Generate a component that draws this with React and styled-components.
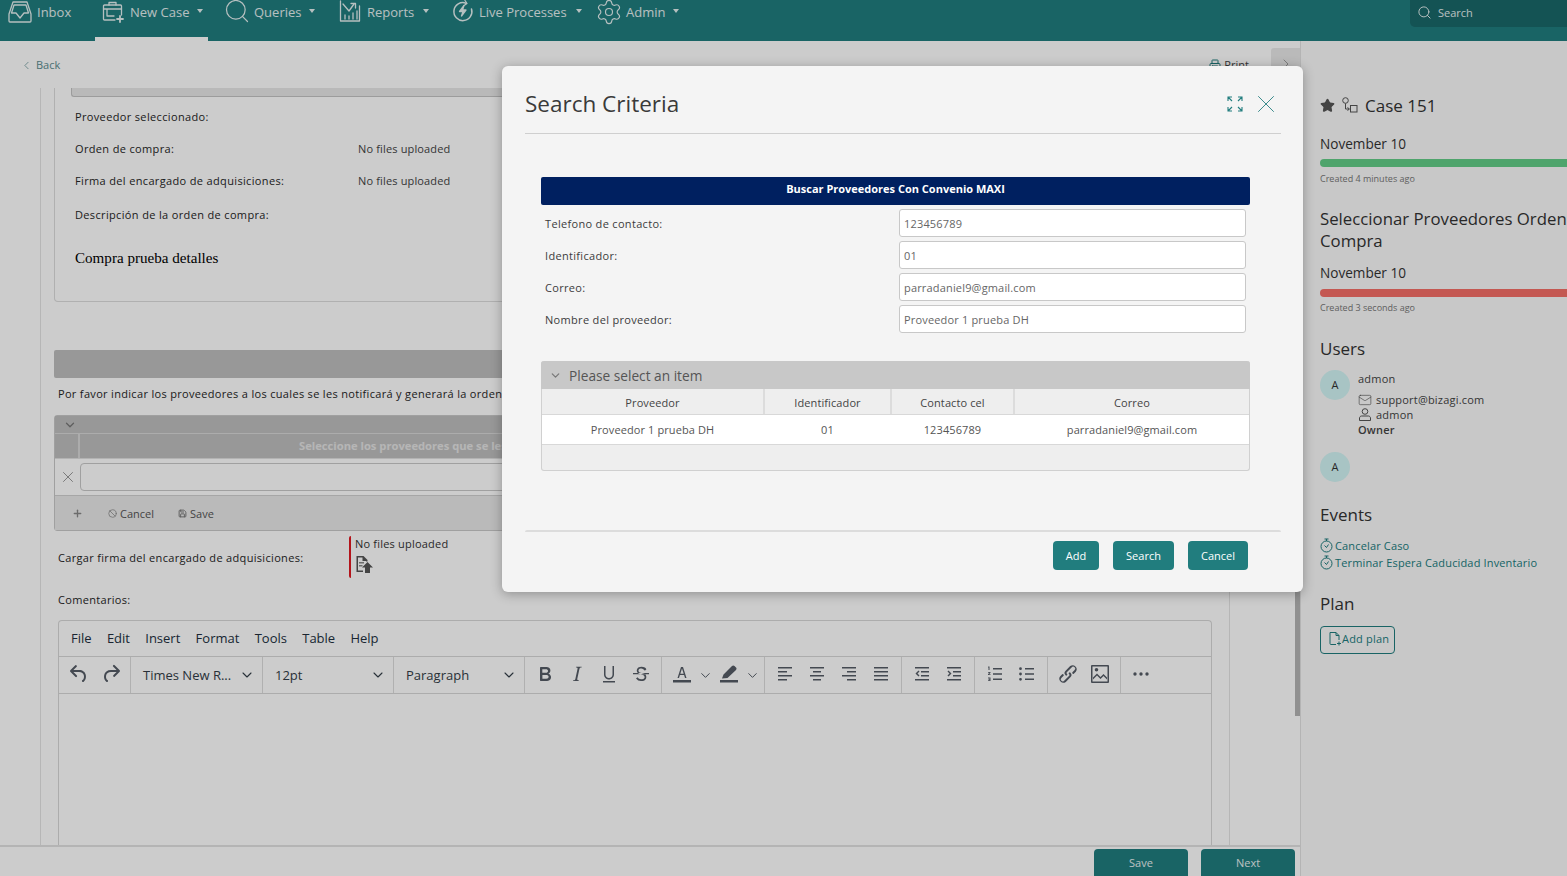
import React from 'react';
import styled, { createGlobalStyle } from 'styled-components';
import { Search, Settings, X, ChevronDown, ChevronLeft, ChevronRight, Printer, Mail, Star, Plus, Ban, Save } from 'lucide-react';

const GlobalStyle = createGlobalStyle`
  html, body { margin: 0; padding: 0; height: 100%; overflow: hidden; }
  body { font-family: "Open Sans", "Liberation Sans", sans-serif; font-size: 11px; color: #333; background: #fff; }
  * { box-sizing: border-box; }
`;

const Shell = styled.div`
  position: relative;
  width: 100%;
  height: 100vh;
  display: flex;
  flex-direction: column;
  overflow: hidden;
`;

/* top navigation */
const Nav = styled.nav`
  height: 41px;
  flex: none;
  background: #207d7f;
  display: flex;
  color: #e4f0f0;
  font-size: 13px;
`;
const NavItem = styled.div`
  width: ${p => p.$w}px;
  flex: none;
  height: 41px;
  padding: 0 0 0 ${p => p.$pad}px;
  display: flex;
  align-items: flex-start;
  gap: ${p => p.$gap ?? 5}px;
  border-bottom: 4px solid ${p => (p.$active ? '#fff' : 'transparent')};
  span { line-height: 24px; }
  svg { flex: none; }
`;
const Caret = styled.i`
  margin: 9px 0 0 ${p => p.$ml ?? 3}px;
  width: 0;
  height: 0;
  border-left: 3.5px solid transparent;
  border-right: 3.5px solid transparent;
  border-top: 4px solid #e4f0f0;
`;
const NavSearch = styled.div`
  margin-left: auto;
  width: 157px;
  height: 27px;
  background: #1a6869;
  border-radius: 0 0 0 5px;
  display: flex;
  align-items: center;
  gap: 6px;
  padding: 0 0 2px 7px;
  font-size: 11px;
`;

const Body = styled.div`
  flex: 1;
  min-height: 0;
  display: flex;
`;
const Main = styled.main`
  position: relative;
  width: 1301px;
  flex: none;
  display: flex;
  flex-direction: column;
  background: #fff;
  border-right: 1px solid #e2e2e2;
`;
const BackBar = styled.div`
  height: 47px;
  flex: none;
  display: flex;
  align-items: flex-start;
  padding: 17px 0 0 20px;
  font-size: 11px;
`;
const BackLink = styled.div`
  display: flex;
  align-items: center;
  gap: 3px;
  color: #5c8c90;
  line-height: 14px;
`;
const PrintLink = styled.div`
  margin-left: 1149px;
  display: flex;
  align-items: center;
  gap: 3px;
  color: #444;
  line-height: 14px;
  svg { color: #207d7f; }
`;
const CollapseTab = styled.div`
  position: absolute;
  right: 0;
  top: 7px;
  width: 29px;
  height: 40px;
  background: #e9e9e9;
  border-radius: 3px 0 0 3px;
  display: flex;
  align-items: flex-start;
  justify-content: center;
  padding-top: 8px;
  color: #888;
`;
const ScrollThumb = styled.div`
  position: absolute;
  right: 0;
  top: 47px;
  width: 5px;
  bottom: 160px;
  background: #b4b4b4;
`;
const Scroller = styled.div`
  flex: 1;
  min-height: 0;
  overflow: hidden;
  padding-left: 40px;
`;
const FormColumn = styled.div`
  width: 1190px;
  height: 100%;
  border-left: 1px solid #e4e4e4;
  border-right: 1px solid #e4e4e4;
  padding-left: 13px;
`;
const Panel = styled.section`
  width: 1175px;
  height: 214px;
  border: 1px solid #dcdcdc;
  border-top: 0;
  border-radius: 0 0 4px 4px;
  padding-left: 16px;
`;
const PanelStub = styled.div`
  height: 9px;
  background: #e8e8e8;
  border-left: 1px solid #c4c4c4;
  border-bottom: 1px solid #c4c4c4;
  border-radius: 0 0 0 3px;
  margin-bottom: 3px;
`;
const FieldRow = styled.div`
  height: 32px;
  margin-top: ${p => p.$mt ?? 0}px;
  padding-left: 4px;
  display: grid;
  grid-template-columns: 283px 1fr;
  align-items: center;
`;
const FieldLabel = styled.label`
  color: #262626;
  font-weight: 500;
  letter-spacing: 0.35px;
`;
const FieldValue = styled.div`
  color: #444;
  letter-spacing: 0.15px;
`;
const SerifText = styled.div`
  font-family: "Liberation Serif", serif;
  font-size: 15.1px;
  color: #000;
  margin-top: 12px;
  padding-left: 4px;
  line-height: 32px;
`;
const SectionBar = styled.div`
  width: 1175px;
  height: 28px;
  margin-top: 48px;
  background: #bfbfbf;
  border-radius: 2px;
`;
const Note = styled.p`
  margin: 0;
  height: 37px;
  padding: 8px 0 0 4px;
  line-height: 15px;
  font-weight: 500;
  letter-spacing: 0.32px;
  white-space: nowrap;
  color: #262626;
`;
const EditGrid = styled.div`
  width: 1175px;
  height: 116px;
  border: 1px solid #c8c8c8;
  border-radius: 3px;
  display: flex;
  flex-direction: column;
`;
const EditTop = styled.div`
  height: 18px;
  background: #bfbfbf;
  padding-left: 8px;
  color: #777;
  display: flex;
  align-items: center;
  border-bottom: 1px solid #d8d8d8;
`;
const EditHead = styled.div`
  height: 25px;
  background: #bfbfbf;
  display: grid;
  grid-template-columns: 23px 1fr;
  color: #e4e4e4;
  font-size: 11.2px;
  font-weight: 700;
  border-bottom: 1px solid #e0e0e0;
  line-height: 23px;
`;
const EditHeadCell = styled.div`
  border-left: 2px solid #d8d8d8;
  padding-left: 219px;
  white-space: nowrap;
`;
const EditRow = styled.div`
  height: 37px;
  display: grid;
  grid-template-columns: 21px 1fr;
  align-items: center;
  border-bottom: 1px solid #d0d0d0;
  color: #666;
  padding-left: 4px;
`;
const PlainInput = styled.div`
  height: 28px;
  border: 1px solid #c8c8c8;
  border-radius: 4px;
  background: #fff;
`;
const EditFoot = styled.div`
  flex: 1;
  background: #e9e9e9;
  display: flex;
  align-items: center;
  padding-left: 17px;
  color: #444;
  font-size: 11px;
`;
const FootAction = styled.div`
  display: flex;
  align-items: center;
  gap: 3px;
  margin-left: ${p => p.$ml}px;
  color: #555;
`;
const UploadRow = styled.div`
  height: 44px;
  margin-top: 5px;
  padding: 0 0 2px 4px;
  display: grid;
  grid-template-columns: 291px 1fr;
  align-items: center;
  font-weight: 500;
  letter-spacing: 0.32px;
  color: #262626;
`;
const UploadBox = styled.div`
  height: 42px;
  align-self: start;
  border-left: 2px solid #e01a22;
  border-radius: 2px;
  padding-left: 4px;
  font-weight: 400;
  letter-spacing: 0.2px;
  color: #333;
  line-height: 15px;
  svg { display: block; margin-top: 4px; }
`;
const CommentLabel = styled.div`
  height: 40px;
  padding: 5px 0 0 4px;
  line-height: 30px;
  font-weight: 500;
  letter-spacing: 0.32px;
  color: #262626;
`;

/* rich text editor */
const Editor = styled.div`
  margin-left: 4px;
  width: 1154px;
  border: 1px solid #d8d8d8;
  border-bottom: 0;
  border-radius: 4px 4px 0 0;
  height: 300px;
  font-size: 13px;
  color: #222f3e;
`;
const MenuBar = styled.div`
  height: 35px;
  display: flex;
  align-items: center;
  gap: 15.3px;
  padding: 0 0 2px 12px;
`;
const ToolBar = styled.div`
  height: 38px;
  display: flex;
  border-top: 1px solid #d8d8d8;
  border-bottom: 1px solid #d8d8d8;
`;
const ToolGroup = styled.div`
  display: flex;
  align-items: center;
  padding: 0 ${p => p.$pr ?? 4}px 0 ${p => p.$pl ?? 4}px;
  border-right: 1px solid #dcdcdc;
  &:last-child { border-right: 0; }
`;
const ToolBtn = styled.div`
  width: 24px;
  height: 24px;
  margin: 0 ${p => p.$mx ?? 4}px 2px;
  flex: none;
  svg { display: block; fill: #555c66; }
`;
const SplitChevron = styled.div`
  width: 23px;
  margin-left: ${p => p.$ml ?? 0}px;
  display: flex;
  justify-content: center;
  color: #555c66;
`;
const SelectBox = styled.div`
  width: ${p => p.$w ?? 131}px;
  padding: 0 7px 0 12px;
  display: flex;
  align-items: center;
  justify-content: space-between;
  border-right: 1px solid #dcdcdc;
  color: #333d47;
`;

const FooterBar = styled.footer`
  height: 31px;
  flex: none;
  background: #fff;
  border-top: 2px solid #e2e2e2;
  display: flex;
  justify-content: flex-end;
  gap: 13px;
  padding: 2px 5px 0 0;
`;
const FooterButton = styled.button`
  width: 94px;
  height: 30px;
  border: 0;
  border-radius: 4px 4px 0 0;
  background: #207d7f;
  color: #e8f2f2;
  font: 11px "Open Sans", sans-serif;
  padding: 0 0 3px;
`;

/* right column */
const Side = styled.aside`
  flex: 1;
  min-width: 0;
  overflow: hidden;
  background: #fafafa;
  padding: 52px 0 0 19px;
  color: #333;
`;
const CaseRow = styled.div`
  height: 24px;
  display: flex;
  align-items: center;
  gap: 6px;
  font-size: 17px;
  svg:nth-child(2) { margin-right: 1px; }
`;
const SideDate = styled.div`
  margin-top: ${p => p.$mt}px;
  font-size: 13.6px;
  line-height: 20px;
`;
const Progress = styled.div`
  margin-top: ${p => p.$mt}px;
  width: 320px;
  height: 8px;
  border-radius: 4px 0 0 4px;
  background: ${p => p.$color};
`;
const Created = styled.div`
  margin-top: ${p => p.$mt}px;
  font-size: 9px;
  line-height: 14px;
  color: #777;
`;
const SideTitle = styled.div`
  margin-top: 22px;
  width: 300px;
  font-size: 16.8px;
  line-height: 22px;
`;
const SideHeading = styled.h3`
  margin: ${p => p.$mt}px 0 0;
  font-size: 17px;
  font-weight: 400;
  line-height: 24px;
`;
const UserRow = styled.div`
  display: flex;
  gap: 8px;
  margin-top: ${p => p.$mt}px;
`;
const Avatar = styled.div`
  width: 30px;
  height: 30px;
  border-radius: 50%;
  background: #d2f5f5;
  flex: none;
  display: flex;
  align-items: center;
  justify-content: center;
  padding-bottom: 2px;
  font-size: 11px;
  color: #333;
`;
const UserInfo = styled.div`
  font-size: 11px;
  color: #444;
  letter-spacing: 0.2px;
`;
const UserName = styled.div`
  line-height: 18px;
  margin-bottom: 4px;
`;
const UserLine = styled.div`
  height: 15px;
  display: flex;
  align-items: center;
  gap: 4px;
  font-weight: ${p => (p.$bold ? 600 : 400)};
`;
const EventList = styled.div`
  margin-top: 10px;
`;
const EventLink = styled.div`
  height: 17px;
  display: flex;
  align-items: center;
  gap: 2px;
  color: #207d7f;
  font-size: 11px;
  letter-spacing: 0.15px;
  white-space: nowrap;
`;
const PlanButton = styled.div`
  margin-top: 10px;
  width: 75px;
  height: 28px;
  border: 1px solid #207d7f;
  border-radius: 4px;
  display: flex;
  align-items: center;
  padding: 0 0 3px 8px;
  color: #207d7f;
  font-size: 11px;
  letter-spacing: 0.2px;
`;

/* dialog */
const Overlay = styled.div`
  position: absolute;
  inset: 0;
  background: rgba(0, 0, 0, 0.2);
`;
const Modal = styled.div`
  position: absolute;
  left: 502px;
  top: 66px;
  width: 801px;
  height: 526px;
  background: #f4f4f4;
  border-radius: 6px;
  box-shadow: 0 2px 12px rgba(0, 0, 0, 0.3);
  padding: 0 22px 0 23px;
`;
const ModalHead = styled.div`
  height: 68px;
  padding-top: 14px;
  border-bottom: 1px solid #cfcfcf;
  display: flex;
  align-items: flex-start;
  justify-content: space-between;
`;
const ModalTitle = styled.h2`
  margin: 0;
  font-size: 22.5px;
  font-weight: 400;
  line-height: 48px;
  color: #3a3a3a;
`;
const ModalTools = styled.div`
  display: flex;
  gap: 8px;
  padding-top: 9px;
  color: #217d7e;
  svg { display: block; }
`;
const ExpandWrap = styled.div`
  margin-top: 7px;
`;
const ModalBody = styled.div`
  margin: 43px 0 0 16px;
  width: 709px;
`;
const Banner = styled.div`
  height: 28px;
  background: #002060;
  border-radius: 2px;
  color: #fff;
  font-size: 11px;
  font-weight: 700;
  text-align: center;
  line-height: 24px;
`;
const CriteriaRows = styled.div`
  margin-top: 4px;
  display: flex;
  flex-direction: column;
  gap: 4px;
`;
const CriteriaRow = styled.div`
  height: 28px;
  display: grid;
  grid-template-columns: 354px 347px;
  align-items: center;
  padding-left: 4px;
  letter-spacing: 0.17px;
`;
const CriteriaLabel = styled.label`
  color: #3c3c3c;
  font-weight: 500;
  letter-spacing: 0.32px;
`;
const CriteriaInput = styled.div`
  height: 28px;
  line-height: 27px;
  background: #fff;
  border: 1px solid #c8c8c8;
  border-radius: 3px;
  padding-left: 4px;
  color: #666;
`;
const ResultGrid = styled.div`
  margin-top: 28px;
  height: 110px;
  border: 1px solid #d0d0d0;
  border-top: 0;
  border-radius: 3px;
  display: flex;
  flex-direction: column;
  background: #eee;
`;
const ResultTitle = styled.div`
  margin: 0 -1px;
  height: 28px;
  background: #c8c8c8;
  border-radius: 3px 3px 0 0;
  display: flex;
  align-items: center;
  gap: 7px;
  padding-left: 8px;
  font-size: 13.7px;
  color: #555;
  svg { flex: none; }
`;
const ResultColumns = styled.div`
  display: grid;
  grid-template-columns: 221px 127px 123px 1fr;
  height: ${p => p.$h}px;
  background: ${p => p.$bg ?? 'transparent'};
  border-bottom: 1px solid #d8d8d8;
  letter-spacing: 0.1px;
`;
const HeadCell = styled.div`
  display: flex;
  align-items: center;
  justify-content: center;
  padding-top: 2px;
  color: #444;
  border-left: ${p => (p.$first ? '0' : '2px solid #dcdcdc')};
`;
const DataCell = styled.div`
  display: flex;
  align-items: center;
  justify-content: center;
  color: #555;
  border-left: ${p => (p.$first ? '0' : '2px solid transparent')};
`;
const ModalFoot = styled.div`
  margin-top: 59px;
  border-top: 2px solid #dcdcdc;
  border-radius: 2px;
  padding: 9px 33px 0 0;
  display: flex;
  justify-content: flex-end;
  gap: 14px;
`;
const ModalButton = styled.button`
  width: ${p => p.$w}px;
  height: 29px;
  background: #217d7e;
  color: #fff;
  border: 0;
  border-radius: 4px;
  font: 11px "Open Sans", sans-serif;
  padding: 0;
`;

/* nav icons */
const S = { fill: 'none', stroke: 'currentColor', strokeWidth: 1.3, strokeLinecap: 'round', strokeLinejoin: 'round' };

const InboxIcon = () => (
  <svg width="24" height="22" viewBox="0 0 24 22" style={{ marginTop: 1 }} {...S}>
    <path d="M5 1h14l4 12v7a1 1 0 0 1-1 1H2a1 1 0 0 1-1-1v-7L5 1Z" />
    <path d="M6 4h12l2.500 8H16l-4 5-4-5H3.500L6 4Z" />
  </svg>
);
const NewCaseIcon = () => (
  <svg width="23" height="22" viewBox="0 0 23 22" style={{ marginTop: 1 }} {...S}>
    <path d="M7 4V1.500h7V4" />
    <path d="M13 19H2.500a1 1 0 0 1-1-1V5a1 1 0 0 1 1-1h16a1 1 0 0 1 1 1v9" />
    <path d="M1.500 8h18M5 8v7h7" />
    <path d="M18 15v6M15 18h6" strokeWidth="1.800" />
  </svg>
);
const ReportsIcon = () => (
  <svg width="22" height="22" viewBox="0 0 22 22" {...S}>
    <path d="M1.500 1v20h19V6" />
    <path d="M4 4l6 7 5-7" />
    <path d="M12 3.500h4.500V8" />
    <path d="M6 19v-4M10 19v-3M14 19v-6M18 19v-8" />
  </svg>
);
const LiveIcon = () => (
  <svg width="22" height="22" viewBox="0 0 22 22" {...S}>
    <path d="M14 3.200A9 9 0 1 0 19.500 9" strokeWidth="1.500" />
    <path d="M13 .5l2 3-3 2" />
    <path d="M12 5.500 7.500 11.500H11l-1.500 4.500 4.500-6h-3.500L12 5.500Z" fill="currentColor" />
  </svg>
);
const RouteIcon = () => (
  <svg width="17" height="16" viewBox="0 0 17 16" fill="none" stroke="#555" strokeWidth="1">
    <circle cx="4.500" cy="3.500" r="2.800" />
    <path d="M4.500 6.500V12H8M6.500 10.500 8.500 12l-2 1.500" />
    <rect x="9.500" y="8.500" width="6.500" height="6.500" />
  </svg>
);
const UserIcon = () => (
  <svg width="14" height="13" viewBox="0 0 13 13" fill="none" stroke="#555" strokeWidth="1">
    <circle cx="6.500" cy="3.500" r="2.800" />
    <path d="M1 12.500v-2.500c0-1 1-2 2-2h7c1 0 2 1 2 2v2.500H1Z" />
  </svg>
);
const TimerIcon = () => (
  <svg width="13" height="15" viewBox="0 0 13 15" fill="none" stroke="#207d7f" strokeWidth="1" style={{ flex: 'none' }}>
    <circle cx="6.500" cy="8.500" r="5.500" />
    <path d="M4.500 1h4M6.500 1v2M4.500 7.500l2 2 2-3" />
  </svg>
);
const FilePlusIcon = () => (
  <svg width="13" height="15" viewBox="0 0 13 15" fill="none" stroke="#207d7f" strokeWidth="1" style={{ flex: 'none' }}>
    <path d="M7 13.500H2a1 1 0 0 1-1-1V1.500h6l3 3V9" />
    <path d="M7 1.500v3h3M10 10.500v4M8 12.500h4" />
  </svg>
);
const UploadIcon = () => (
  <svg width="18" height="18" viewBox="0 0 18 18">
    <path d="M1.500 1h7l4 4v1.500H11V6H7.500V2.500H3V15.500h5V17H1.500V1Z" fill="#555" />
    <path d="M4 7h5v1.500H4zM4 10h3.500v1.500H4z" fill="#888" />
    <path d="M12.500 7 18 12.500h-3V18h-5v-5.500H7l5.500-5.500Z" fill="#555" />
  </svg>
);
const ExpandIcon = () => (
  <svg width="16" height="16" viewBox="0 0 16 16" fill="none" stroke="currentColor" strokeWidth="1.100">
    <path d="M1 5V1h4M1 1l4 4M11 1h4v4M15 1l-4 4M1 11v4h4M1 15l4-4M15 11v4h-4M15 15l-4-4" />
  </svg>
);

/* editor toolbar icons */
const T = ({ d }) => (
  <svg width="24" height="24" viewBox="0 0 24 24"><path d={d} fillRule="evenodd" /></svg>
);
const P = {
  undo: 'M6.400 8H12c3.700 0 6.200 2 6.800 5.100.6 2.700-.4 5.600-2.300 6.800a1 1 0 0 1-1-1.800c1.100-.6 1.800-2.700 1.400-4.600-.5-2.100-2.100-3.500-4.900-3.500H6.400l3.300 3.300a1 1 0 1 1-1.400 1.400l-5-5a1 1 0 0 1 0-1.400l5-5a1 1 0 0 1 1.400 1.400L6.400 8Z',
  redo: 'M17.600 10H12c-2.800 0-4.400 1.400-4.900 3.500-.4 2 .3 4 1.400 4.600a1 1 0 1 1-1 1.800c-2-1.200-2.900-4.100-2.300-6.800.6-3.100 3-5.100 6.800-5.100h5.600l-3.300-3.300a1 1 0 1 1 1.400-1.400l5 5a1 1 0 0 1 0 1.400l-5 5a1 1 0 0 1-1.400-1.400l3.300-3.300Z',
  bold: 'M7.800 19c-.3 0-.5 0-.6-.2l-.2-.5V5.700c0-.2 0-.4.2-.5l.6-.2h5c1.500 0 2.700.3 3.500 1 .7.600 1.100 1.400 1.100 2.500a3 3 0 0 1-.6 1.900c-.4.600-1 1-1.600 1.200.4.100.9.300 1.300.6s.8.700 1 1.200c.4.400.5 1 .5 1.600 0 1.300-.4 2.300-1.300 3-.8.700-2.100 1-3.800 1H7.800Zm5-8.300c.6 0 1.200-.1 1.600-.5.400-.3.600-.7.600-1.300 0-1.100-.8-1.700-2.300-1.700H9.300v3.500h3.500Zm.5 6c.7 0 1.300-.1 1.700-.4.400-.4.600-.9.600-1.500s-.2-1-.7-1.400c-.4-.3-1-.4-2-.4H9.400v3.700h3.900Z',
  italic: 'M16.700 4.700l-.1.900h-.3c-.6 0-1 0-1.400.3-.3.300-.4.600-.5 1.100l-2.100 9.800v.6c0 .5.400.8 1.400.8h.2l-.2.8H8l.2-.8h.2c1.100 0 1.800-.5 2-1.500l2.100-9.800.1-.5c0-.6-.4-.8-1.400-.8h-.3l.2-.9h5.600Z',
  underline: 'M7 4h1.500v8.500c0 2 1.500 3.500 3.500 3.500s3.500-1.500 3.500-3.500V4H17v8.500c0 2.800-2.200 5-5 5s-5-2.200-5-5V4ZM6 19h12v1.500H6V19Z',
  strike: 'M15.600 8.500c-.5-.7-1-1.100-1.300-1.300-.6-.4-1.300-.6-2-.6-2.700 0-2.800 1.700-2.800 2.100 0 1.600 1.800 2 3.200 2.300 4.400.9 4.600 2.800 4.600 3.900 0 1.400-.7 4.100-5 4.100A6.200 6.200 0 0 1 7 16.400l1.500-1.100c.4.600 1.600 2 3.700 2 1.600 0 2.500-.4 3-1 .3-.4.400-.8.400-1.300 0-1.600-1.800-2.200-3.400-2.500-1.900-.5-4.400-1.100-4.400-3.900 0-.6.200-3.900 4.700-3.900 1.200 0 2.300.3 3.300.9.500.3 1 .8 1.600 1.600l-1.300 1.300ZM4 11h16v1.200H4V11Z',
  color: 'M3 18h18v2.500H3V18ZM11 5h2l3.500 11H15l-.9-3H9.900L9 16H7.500L11 5Zm-.7 6.700h3.400L12 6.500l-1.700 5.200Z',
  highlight: 'M3 18h18v2.500H3V18ZM5 16.500l1.500-4L14 5l1-1c.8-.7 1.800-.7 2.500 0l1.500 1.500c.7.7.7 1.700 0 2.500l-8.500 8-5.500.5Z',
  alignLeft: 'M5 5h14v1.500H5V5Zm0 4h9v1.500H5V9Zm0 4h14v1.500H5V13Zm0 4h9v1.500H5V17Z',
  alignCenter: 'M5 5h14v1.500H5V5Zm3 4h8v1.500H8V9Zm-3 4h14v1.500H5V13Zm3 4h8v1.500H8V17Z',
  alignRight: 'M5 5h14v1.500H5V5Zm5 4h9v1.500h-9V9Zm-5 4h14v1.500H5V13Zm5 4h9v1.500h-9V17Z',
  justify: 'M5 5h14v1.500H5V5Zm0 4h14v1.500H5V9Zm0 4h14v1.500H5V13Zm0 4h14v1.500H5V17Z',
  outdent: 'M5 5h14v1.500H5V5Zm6 4h8v1.500h-8V9Zm0 4h8v1.500h-8V13Zm-6 4h14v1.500H5V17ZM8.500 8.500 9.500 9.500 7.500 11.500l2 2-1 1-3-3 3-3Z',
  indent: 'M5 5h14v1.500H5V5Zm6 4h8v1.500h-8V9Zm0 4h8v1.500h-8V13Zm-6 4h14v1.500H5V17ZM6.500 8.500l3 3-3 3-1-1 2-2-2-2 1-1Z',
  numlist: 'M10 6h9v1.500h-9V6Zm0 5.300h9v1.500h-9v-1.500Zm0 5.200h9V18h-9v-1.500ZM5.200 4.500h1.300V8H5.500V5.400H5l.2-.9ZM5 10h2.500v.8l-1.400 1.500h1.400v.8H5v-.8l1.400-1.500H5V10Zm0 5.500h2.500V19H5v-.8h1.500v-.5H5.500v-.7h1v-.6H5v-.9Z',
  bullist: 'M10 6h9v1.500h-9V6Zm0 5.300h9v1.500h-9v-1.500Zm0 5.200h9V18h-9v-1.500ZM5.500 5.300a1.300 1.300 0 1 1 0 2.800 1.300 1.300 0 0 1 0-2.800Zm0 5.300a1.300 1.300 0 1 1 0 2.800 1.300 1.300 0 0 1 0-2.800Zm0 5.300a1.300 1.300 0 1 1 0 2.800 1.300 1.300 0 0 1 0-2.800Z',
  image: 'M4 3h16a1 1 0 0 1 1 1v16a1 1 0 0 1-1 1H4a1 1 0 0 1-1-1V4a1 1 0 0 1 1-1Zm.5 1.500v15h15v-15h-15Zm4 1.500a1.800 1.800 0 1 1 0 3.600 1.800 1.800 0 0 1 0-3.600ZM5 17.500v-2l4-4 3.500 3.500 3-3 3.500 3.500v2l-3.500-3.500-3 3-3.500-3.500-4 4Z',
  more: 'M6 10.300a1.700 1.700 0 0 1 0 3.400 1.700 1.700 0 0 1 0-3.400Zm6 0a1.700 1.700 0 0 1 0 3.400 1.700 1.700 0 0 1 0-3.400Zm6 0a1.700 1.700 0 0 1 0 3.400 1.700 1.700 0 0 1 0-3.400Z',
  link: 'M6.200 12.300a1 1 0 0 1 1.400 1.400l-2 2a2 2 0 1 0 2.800 2.800l4.800-4.800a1 1 0 0 0 0-1.400 1 1 0 1 1 1.400-1.300 3 3 0 0 1 0 4.100l-4.800 4.800a4 4 0 0 1-5.600-5.600l2-2ZM17.800 11.700a1 1 0 0 1-1.400-1.400l2-2a2 2 0 1 0-2.800-2.800l-4.800 4.800a1 1 0 0 0 0 1.400 1 1 0 1 1-1.400 1.300 3 3 0 0 1 0-4.100l4.800-4.800a4 4 0 0 1 5.600 5.600l-2 2Z',
};

const Tool = ({ k, mx }) => <ToolBtn $mx={mx}><T d={P[k]} /></ToolBtn>;

const criteria = [
  ['Telefono de contacto:', '123456789'],
  ['Identificador:', '01'],
  ['Correo:', 'parradaniel9@gmail.com'],
  ['Nombre del proveedor:', 'Proveedor 1 prueba DH'],
];

export default function App() {
  return (
    <Shell>
      <GlobalStyle />
      <Nav>
        <NavItem $w={95} $pad={8}><InboxIcon /><span>Inbox</span></NavItem>
        <NavItem $w={113} $pad={7} $active><NewCaseIcon /><span>New Case</span><Caret /></NavItem>
        <NavItem $w={131} $pad={15} $gap={3}><Search size={28} strokeWidth={1.05} style={{ marginTop: -3 }} /><span>Queries</span><Caret $ml={5} /></NavItem>
        <NavItem $w={113} $pad={0} $gap={6}><ReportsIcon /><span>Reports</span><Caret $ml={3} /></NavItem>
        <NavItem $w={145} $pad={0} $gap={5}><LiveIcon /><span>Live Processes</span><Caret $ml={4} /></NavItem>
        <NavItem $w={100} $pad={0} $gap={3}><Settings size={28} strokeWidth={1} style={{ margin: '-2px 0 0 -2px' }} /><span>Admin</span><Caret $ml={5} /></NavItem>
        <NavSearch><Search size={15} strokeWidth={1.6} /><span>Search</span></NavSearch>
      </Nav>
      <Body>
        <Main>
          <BackBar>
            <BackLink><ChevronLeft size={13} strokeWidth={1.3} />Back</BackLink>
            <PrintLink><Printer size={12} />Print</PrintLink>
            <CollapseTab><ChevronRight size={16} strokeWidth={1.2} /></CollapseTab>
          </BackBar>
          <ScrollThumb />
          <Scroller>
            <FormColumn>
              <Panel>
                <PanelStub />
                <FieldRow><FieldLabel>Proveedor seleccionado:</FieldLabel></FieldRow>
                <FieldRow><FieldLabel>Orden de compra:</FieldLabel><FieldValue>No files uploaded</FieldValue></FieldRow>
                <FieldRow><FieldLabel>Firma del encargado de adquisiciones:</FieldLabel><FieldValue>No files uploaded</FieldValue></FieldRow>
                <FieldRow $mt={2}><FieldLabel>Descripción de la orden de compra:</FieldLabel></FieldRow>
                <SerifText>Compra prueba detalles</SerifText>
              </Panel>
              <SectionBar />
              <Note>Por favor indicar los proveedores a los cuales se les notificará y generará la orden de compra</Note>
              <EditGrid>
                <EditTop><ChevronDown size={14} strokeWidth={2.2} /></EditTop>
                <EditHead><div /><EditHeadCell>Seleccione los proveedores que se les notificará</EditHeadCell></EditHead>
                <EditRow><X size={18} strokeWidth={0.9} /><PlainInput /></EditRow>
                <EditFoot>
                  <Plus size={11} strokeWidth={3} color="#888" />
                  <FootAction $ml={25}><Ban size={9} strokeWidth={2} color="#888" />Cancel</FootAction>
                  <FootAction $ml={24}><Save size={9} strokeWidth={2.6} color="#777" />Save</FootAction>
                </EditFoot>
              </EditGrid>
              <UploadRow>
                <div>Cargar firma del encargado de adquisiciones:</div>
                <UploadBox>No files uploaded<UploadIcon /></UploadBox>
              </UploadRow>
              <CommentLabel>Comentarios:</CommentLabel>
              <Editor>
                <MenuBar>
                  {['File', 'Edit', 'Insert', 'Format', 'Tools', 'Table', 'Help'].map(m => <span key={m}>{m}</span>)}
                </MenuBar>
                <ToolBar>
                  <ToolGroup $pr={3}><Tool k="undo" /><Tool k="redo" /></ToolGroup>
                  <SelectBox $w={132}>Times New R...<ChevronDown size={16} strokeWidth={1.6} /></SelectBox>
                  <SelectBox>12pt<ChevronDown size={16} strokeWidth={1.6} /></SelectBox>
                  <SelectBox>Paragraph<ChevronDown size={16} strokeWidth={1.6} /></SelectBox>
                  <ToolGroup><Tool k="bold" /><Tool k="italic" /><Tool k="underline" /><Tool k="strike" /></ToolGroup>
                  <ToolGroup $pr={0}>
                    <Tool k="color" />
                    <SplitChevron $ml={-4}><ChevronDown size={15} strokeWidth={1.6} /></SplitChevron>
                    <Tool k="highlight" mx={0} />
                    <SplitChevron><ChevronDown size={15} strokeWidth={1.6} /></SplitChevron>
                  </ToolGroup>
                  <ToolGroup><Tool k="alignLeft" /><Tool k="alignCenter" /><Tool k="alignRight" /><Tool k="justify" /></ToolGroup>
                  <ToolGroup><Tool k="outdent" /><Tool k="indent" /></ToolGroup>
                  <ToolGroup><Tool k="numlist" /><Tool k="bullist" /></ToolGroup>
                  <ToolGroup><Tool k="link" /><Tool k="image" /></ToolGroup>
                  <ToolGroup><Tool k="more" /></ToolGroup>
                </ToolBar>
              </Editor>
            </FormColumn>
          </Scroller>
          <FooterBar>
            <FooterButton>Save</FooterButton>
            <FooterButton>Next</FooterButton>
          </FooterBar>
        </Main>
        <Side>
          <CaseRow><Star size={15} fill="#555" color="#555" /><RouteIcon /><span>Case 151</span></CaseRow>
          <SideDate $mt={17}>November 10</SideDate>
          <Progress $mt={5} $color="#63ce88" />
          <Created $mt={5}>Created 4 minutes ago</Created>
          <SideTitle>Seleccionar Proveedores Orden Compra</SideTitle>
          <SideDate $mt={11}>November 10</SideDate>
          <Progress $mt={6} $color="#f66e67" />
          <Created $mt={4}>Created 3 seconds ago</Created>
          <SideHeading $mt={22}>Users</SideHeading>
          <UserRow $mt={9}>
            <Avatar>A</Avatar>
            <UserInfo>
              <UserName>admon</UserName>
              <UserLine><Mail size={14} strokeWidth={1} />support@bizagi.com</UserLine>
              <UserLine><UserIcon />admon</UserLine>
              <UserLine $bold>Owner</UserLine>
            </UserInfo>
          </UserRow>
          <UserRow $mt={15}><Avatar>A</Avatar></UserRow>
          <SideHeading $mt={21}>Events</SideHeading>
          <EventList>
            <EventLink><TimerIcon />Cancelar Caso</EventLink>
            <EventLink><TimerIcon />Terminar Espera Caducidad Inventario</EventLink>
          </EventList>
          <SideHeading $mt={21}>Plan</SideHeading>
          <PlanButton><FilePlusIcon />Add plan</PlanButton>
        </Side>
      </Body>
      <Overlay />
      <Modal>
        <ModalHead>
          <ModalTitle>Search Criteria</ModalTitle>
          <ModalTools><ExpandWrap><ExpandIcon /></ExpandWrap><X size={30} strokeWidth={0.7} /></ModalTools>
        </ModalHead>
        <ModalBody>
          <Banner>Buscar Proveedores Con Convenio MAXI</Banner>
          <CriteriaRows>
            {criteria.map(([label, value]) => (
              <CriteriaRow key={label}>
                <CriteriaLabel>{label}</CriteriaLabel>
                <CriteriaInput>{value}</CriteriaInput>
              </CriteriaRow>
            ))}
          </CriteriaRows>
          <ResultGrid>
            <ResultTitle><ChevronDown size={13} strokeWidth={2.2} color="#777" />Please select an item</ResultTitle>
            <ResultColumns $h={26}>
              <HeadCell $first>Proveedor</HeadCell>
              <HeadCell>Identificador</HeadCell>
              <HeadCell>Contacto cel</HeadCell>
              <HeadCell>Correo</HeadCell>
            </ResultColumns>
            <ResultColumns $h={30} $bg="#fff">
              <DataCell $first>Proveedor 1 prueba DH</DataCell>
              <DataCell>01</DataCell>
              <DataCell>123456789</DataCell>
              <DataCell>parradaniel9@gmail.com</DataCell>
            </ResultColumns>
          </ResultGrid>
        </ModalBody>
        <ModalFoot>
          <ModalButton $w={46}>Add</ModalButton>
          <ModalButton $w={61}>Search</ModalButton>
          <ModalButton $w={60}>Cancel</ModalButton>
        </ModalFoot>
      </Modal>
    </Shell>
  );
}
